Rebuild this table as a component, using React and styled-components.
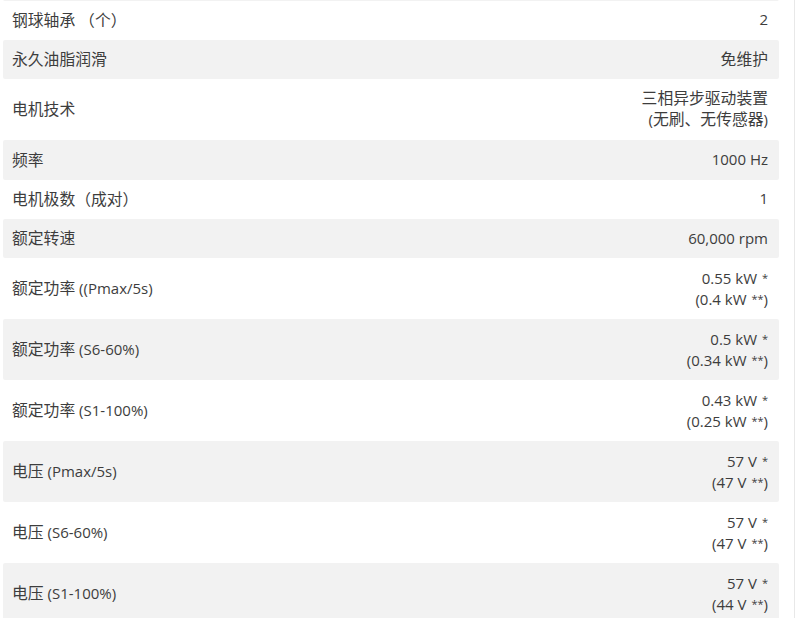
import React from 'react'
import styled, { createGlobalStyle } from 'styled-components'

const GlobalStyle = createGlobalStyle`
  html, body {
    margin: 0;
    background: #fff;
  }
  body {
    font-family: 'Open Sans', 'Noto Sans CJK SC', sans-serif;
    color: #3d3d3d;
  }
`

const specs = [
  { label: '', value: [''] },
  { label: '钢球轴承 （个）', value: ['2'] },
  { label: '永久油脂润滑', value: ['免维护'] },
  { label: '电机技术', value: ['三相异步驱动装置', '(无刷、无传感器)'] },
  { label: '频率', value: ['1000 Hz'] },
  { label: '电机极数（成对）', value: ['1'] },
  { label: '额定转速', value: ['60,000 rpm'] },
  { label: '额定功率 ((Pmax/5s)', value: ['0.55 kW *', '(0.4 kW **)'] },
  { label: '额定功率 (S6-60%)', value: ['0.5 kW *', '(0.34 kW **)'] },
  { label: '额定功率 (S1-100%)', value: ['0.43 kW *', '(0.25 kW **)'] },
  { label: '电压 (Pmax/5s)', value: ['57 V *', '(47 V **)'] },
  { label: '电压 (S6-60%)', value: ['57 V *', '(47 V **)'] },
  { label: '电压 (S1-100%)', value: ['57 V *', '(44 V **)'] },
]

// chinese runs are set a touch larger, asterisks small and raised
const Text = ({ children }) => {
  const parts = children.split(/([\u3000-\u9fff\uff00-\uffef]+|\*+)/)
  return parts.map((part, i) => {
    if (!part) return null
    if (/^\*+$/.test(part)) return <Star key={i}>{part}</Star>
    if (/[\u3000-\u9fff\uff00-\uffef]/.test(part)) return <Han key={i}>{part}</Han>
    return <React.Fragment key={i}>{part}</React.Fragment>
  })
}

const App = () => {
  return (
    <Page>
      <GlobalStyle />
      <Table>
        {specs.map((row, i) => (
          <Row key={i} $shaded={i % 2 === 0} $lines={row.value.length}>
            <Line>
              <Text>{row.label}</Text>
            </Line>
            <Value>
              {row.value.map((line, j) => (
                <Line key={j}>
                  <Text>{line}</Text>
                </Line>
              ))}
            </Value>
          </Row>
        ))}
      </Table>
    </Page>
  )
}

const Page = styled.main`
  width: 795px;
  min-height: 618px;
  box-sizing: border-box;
  border-right: 1px solid #e8e8e8;
  padding: 0 15px 0 3px;
  overflow: hidden;
`

const Table = styled.div`
  display: flex;
  flex-direction: column;
  margin-top: -38.5px;
`

const Row = styled.div`
  display: flex;
  justify-content: space-between;
  align-items: center;
  box-sizing: border-box;
  height: ${(p) => 39.3 + (p.$lines - 1) * 21.7}px;
  padding: 0 11px 0 9px;
  background: ${(p) => (p.$shaded ? '#f2f2f2' : '#fff')};
  border-radius: 2px;
  font-size: 15px;
`

const Line = styled.div`
  height: 21px;
  line-height: 21px;
  white-space: nowrap;
`

const Value = styled.div`
  display: flex;
  flex-direction: column;
  align-items: flex-end;
  text-align: right;
  margin-top: -1px;
`

const Han = styled.span`
  font-size: 15.8px;
`

const Star = styled.span`
  font-size: 11px;
  vertical-align: 2px;
  margin-left: 1px;
`

export default App
